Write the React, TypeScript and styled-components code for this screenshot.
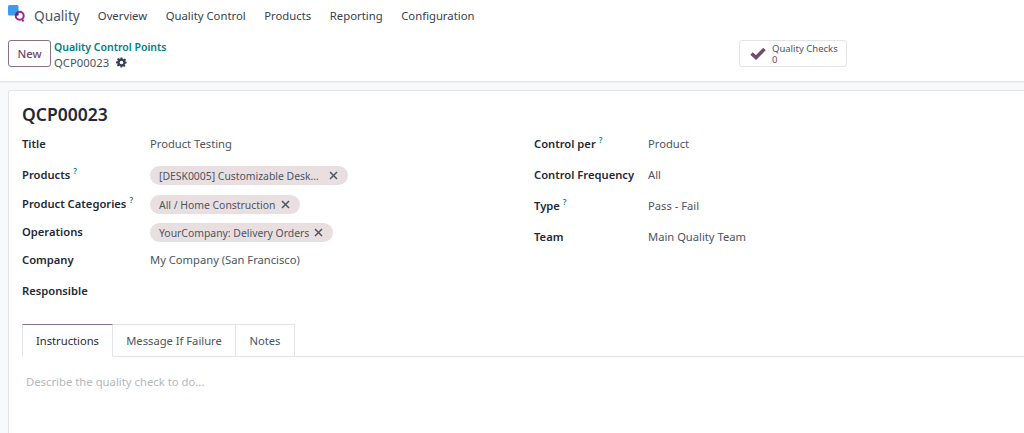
import { createGlobalStyle } from 'styled-components';
import styled from 'styled-components';

const GlobalStyle = createGlobalStyle`
  html, body {
    margin: 0;
    padding: 0;
    height: 433px;
    overflow: hidden;
    background: #fff;
    font-family: "Noto Sans", "Open Sans", sans-serif;
    font-size: 12px;
    color: #374151;
  }
`;

const Page = styled.div`
  width: 1024px;
  height: 433px;
  overflow: hidden;
  display: flex;
  flex-direction: column;
`;

const NavBar = styled.nav`
  height: 30px;
  display: flex;
  align-items: center;
  padding-left: 7px;
`;

const AppName = styled.span`
  font-size: 13.7px;
  margin-left: 7px;
  margin-right: 18px;
  color: #4b5563;
`;

const MenuItem = styled.span`
  font-size: 11.3px;
  margin-right: 18.6px;
  color: #374151;
`;

const ControlPanel = styled.header`
  height: 52px;
  box-sizing: border-box;
  padding: 10px 0 0 8px;
  border-bottom: 1px solid #e2e5e8;
  display: flex;
`;

const NewButton = styled.button`
  width: 43px;
  height: 27px;
  box-sizing: border-box;
  border: 1px solid #8f6f87;
  border-radius: 3px;
  background: #fff;
  color: #714b67;
  font: 500 11.3px "Noto Sans", sans-serif;
  padding: 0;
`;

const Crumbs = styled.div`
  margin-left: 3px;
  width: 685px;
  line-height: 15px;
`;

const CrumbLink = styled.div`
  color: #017e84;
  font-size: 10.5px;
  font-weight: 600;
`;

const CrumbCurrent = styled.div`
  display: flex;
  align-items: center;
  gap: 7px;
  color: #4b5563;
  font-size: 11.3px;
`;

const StatButton = styled.div`
  width: 108px;
  height: 27px;
  box-sizing: border-box;
  border: 1px solid #e2e5e8;
  border-radius: 3px;
  display: flex;
  align-items: center;
  padding-left: 10px;
  gap: 6px;
`;

const StatText = styled.div`
  font-size: 9.5px;
  line-height: 11px;
  color: #4b5563;
  b {
    display: block;
    font-weight: 400;
    color: #714b67;
  }
`;

const Workspace = styled.main`
  flex: 1;
  background: #f8f9fa;
  border-top: 1px solid #eef0f2;
  padding: 7px 0 0 8px;
`;

const Sheet = styled.section`
  height: 100%;
  box-sizing: border-box;
  background: #fff;
  border: 1px solid #e2e5e8;
  border-right: 0;
  border-bottom: 0;
  border-radius: 3px 0 0 0;
  padding: 10px 0 0 13px;
`;

const Heading = styled.h1`
  margin: 0;
  height: 27px;
  font-size: 17.5px;
  line-height: 27px;
  font-weight: 600;
  color: #1f2937;
`;

const Columns = styled.div`
  display: flex;
  height: 196px;
`;

const FieldColumn = styled.div<{ $width: number }>`
  width: ${(p) => p.$width}px;
`;

const Row = styled.div<{ $h: number; $labelWidth: number }>`
  height: ${(p) => p.$h}px;
  display: grid;
  grid-template-columns: ${(p) => p.$labelWidth}px 1fr;
  align-items: center;
`;

const Label = styled.label`
  font-size: 11.2px;
  font-weight: 600;
  color: #1f2937;
  white-space: nowrap;
  sup {
    color: #017e84;
    font-size: 8px;
    margin-left: 3px;
    line-height: 0;
  }
`;

const Value = styled.span`
  font-size: 11.2px;
  color: #4b5563;
`;

const TagCell = styled.div`
  margin-top: 2px;
`;

const Tag = styled.span<{ $gap: number }>`
  display: inline-flex;
  align-items: center;
  height: 19px;
  padding: 0 10px 0 9px;
  gap: ${(p) => p.$gap}px;
  border-radius: 10px;
  background: #e9dfe0;
  color: #4b5563;
  font-size: 10.4px;
  white-space: nowrap;
`;

const TabBar = styled.div`
  display: flex;
  height: 33px;
  box-sizing: border-box;
  border-bottom: 1px solid #e2e5e8;
`;

const Tab = styled.div<{ $w: number; $active?: boolean }>`
  width: ${(p) => p.$w}px;
  height: 33px;
  box-sizing: border-box;
  display: flex;
  align-items: center;
  justify-content: center;
  font-size: 11.2px;
  border: 1px solid #e2e5e8;
  border-left-width: ${(p) => (p.$active ? 1 : 0)}px;
  border-top-color: ${(p) => (p.$active ? '#8f6f87' : '#e2e5e8')};
  border-bottom-color: ${(p) => (p.$active ? '#fff' : '#e2e5e8')};
  color: ${(p) => (p.$active ? '#1f2937' : '#4b5563')};
`;

const Placeholder = styled.div`
  margin: 17px 0 0 4px;
  font-size: 11.3px;
  color: #b4b8bd;
`;

const Logo = () => (
  <svg width="20" height="20" viewBox="0 0 20 20">
    <rect x="1" y="0" width="10.500" height="10.500" rx="1.500" fill="#3b9bf0" />
    <circle cx="12.700" cy="10.700" r="4" fill="none" stroke="#a3238e" strokeWidth="2" />
    <path d="M9 7.500h2.500v3h-3z" fill="#2b3a8c" />
    <path d="M14.800 14l1.800 2.500" stroke="#a3238e" strokeWidth="2" />
  </svg>
);

const Gear = () => (
  <svg width="11" height="11" viewBox="0 0 24 24">
    <path
      fill="#374151"
      fillRule="evenodd"
      d="M10 1h4l.6 3.200 1.900.8 2.700-1.800 2.800 2.800-1.800 2.700.8 1.900L23 10v4l-3.200.6-.8 1.900 1.800 2.700-2.800 2.800-2.700-1.800-1.900.8L13.800 23h-4l-.6-3.200-1.900-.8-2.700 1.800-2.800-2.800 1.800-2.700-.8-1.900L0 14v-4l3.200-.6.8-1.900L2.200 4.800 5 2l2.700 1.800 1.900-.8zM12 8a4 4 0 1 0 0 8 4 4 0 0 0 0-8z"
    />
  </svg>
);

const Check = () => (
  <svg width="16" height="13" viewBox="0 0 16 13">
    <path d="M1.500 6.500l4.500 4L14.500 2" fill="none" stroke="#714b67" strokeWidth="3.500" />
  </svg>
);

const Close = () => (
  <svg width="9" height="9" viewBox="0 0 9 9">
    <path d="M1 1l7 7M8 1L1 8" stroke="#4b5563" strokeWidth="1.500" />
  </svg>
);

const Help = () => <sup>?</sup>;

const leftRows = [
  { h: 31, label: 'Title', value: 'Product Testing' },
  { h: 31, label: 'Products', help: true, tag: '[DESK0005] Customizable Desk…', gap: 10 },
  { h: 27, label: 'Product Categories', help: true, tag: 'All / Home Construction', gap: 6 },
  { h: 29, label: 'Operations', tag: 'YourCompany: Delivery Orders', gap: 5 },
  { h: 27, label: 'Company', value: 'My Company (San Francisco)' },
  { h: 34, label: 'Responsible' },
];

const rightRows = [
  { label: 'Control per', help: true, value: 'Product' },
  { label: 'Control Frequency', value: 'All' },
  { label: 'Type', help: true, value: 'Pass - Fail' },
  { label: 'Team', value: 'Main Quality Team' },
];

const menu = ['Overview', 'Quality Control', 'Products', 'Reporting', 'Configuration'];

const App = () => {
  return (
    <Page>
      <GlobalStyle />
      <NavBar>
        <Logo />
        <AppName>Quality</AppName>
        {menu.map((m) => (
          <MenuItem key={m}>{m}</MenuItem>
        ))}
      </NavBar>
      <ControlPanel>
        <NewButton>New</NewButton>
        <Crumbs>
          <CrumbLink>Quality Control Points</CrumbLink>
          <CrumbCurrent>
            QCP00023 <Gear />
          </CrumbCurrent>
        </Crumbs>
        <StatButton>
          <Check />
          <StatText>
            Quality Checks
            <b>0</b>
          </StatText>
        </StatButton>
      </ControlPanel>
      <Workspace>
        <Sheet>
          <Heading>QCP00023</Heading>
          <Columns>
            <FieldColumn $width={512}>
              {leftRows.map((r) => (
                <Row key={r.label} $h={r.h} $labelWidth={128}>
                  <Label>
                    {r.label}
                    {r.help && <Help />}
                  </Label>
                  {r.value && <Value>{r.value}</Value>}
                  {r.tag && (
                    <TagCell>
                      <Tag $gap={r.gap ?? 5}>
                        {r.tag} <Close />
                      </Tag>
                    </TagCell>
                  )}
                </Row>
              ))}
            </FieldColumn>
            <FieldColumn $width={400}>
              {rightRows.map((r) => (
                <Row key={r.label} $h={31} $labelWidth={114}>
                  <Label>
                    {r.label}
                    {r.help && <Help />}
                  </Label>
                  <Value>{r.value}</Value>
                </Row>
              ))}
            </FieldColumn>
          </Columns>
          <TabBar>
            <Tab $w={91} $active>
              Instructions
            </Tab>
            <Tab $w={123}>Message If Failure</Tab>
            <Tab $w={59}>Notes</Tab>
          </TabBar>
          <Placeholder>Describe the quality check to do...</Placeholder>
        </Sheet>
      </Workspace>
    </Page>
  );
};

export default App;
